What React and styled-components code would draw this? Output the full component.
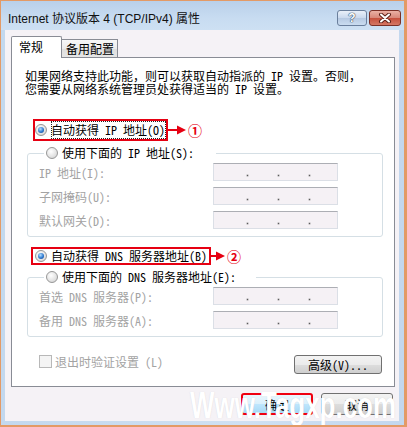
import React from 'react';
import styled, { createGlobalStyle } from 'styled-components';

const GlobalStyle = createGlobalStyle`
  html, body {
    margin: 0;
    padding: 0;
    background: #fff;
  }
  body {
    font-family: "Noto Sans Mono CJK SC", "Noto Sans CJK SC", monospace;
    font-size: 12px;
    color: #000;
  }
`;

const App = () => {
  return (
    <>
      <GlobalStyle />
      <Window>
        <TitleBar>
          <Title>Internet 协议版本 4 (TCP/IPv4) 属性</Title>
          <CaptionButtons>
            <HelpBtn>?</HelpBtn>
            <CloseBtn>
              <svg width='14' height='10' viewBox='0 0 14 10'>
                <path d='M3 1.5 L11 8.5 M11 1.5 L3 8.5' stroke='#5a2018' strokeWidth='4' strokeLinecap='round' />
                <path d='M3 1.5 L11 8.5 M11 1.5 L3 8.5' stroke='#fff' strokeWidth='2' strokeLinecap='round' />
              </svg>
            </CloseBtn>
          </CaptionButtons>
        </TitleBar>

        <Client>
          <TabRow>
            <Tab $active>常规</Tab>
            <Tab>备用配置</Tab>
          </TabRow>

          <Panel>
            <Intro>
              如果网络支持此功能，则可以获取自动指派的 IP 设置。否则，
              <br />
              您需要从网络系统管理员处获得适当的 IP 设置。
            </Intro>

            <Marked $indent={21}>
              <RadioRow $mark $padX={0}>
                <Radio $checked />
                <RadioText $focus>自动获得 IP 地址(O)</RadioText>
              </RadioRow>
              <Arrow />
              <Badge>①</Badge>
            </Marked>

            <Group>
              <Legend $tail={22}>
                <RadioRow>
                  <Radio />
                  <RadioText>使用下面的 IP 地址(S):</RadioText>
                </RadioRow>
              </Legend>
              <FieldList>
                <IpField label='IP 地址(I):' />
                <IpField label='子网掩码(U):' />
                <IpField label='默认网关(D):' />
              </FieldList>
            </Group>

            <Marked $indent={19} $gap={10}>
              <RadioRow $mark $padX={2}>
                <Radio $checked />
                <RadioText>自动获得 DNS 服务器地址(B)</RadioText>
              </RadioRow>
              <Arrow short />
              <Badge>②</Badge>
            </Marked>

            <Group>
              <Legend $tail={20}>
                <RadioRow>
                  <Radio />
                  <RadioText>使用下面的 DNS 服务器地址(E):</RadioText>
                </RadioRow>
              </Legend>
              <FieldList>
                <IpField label='首选 DNS 服务器(P):' />
                <IpField label='备用 DNS 服务器(A):' />
              </FieldList>
            </Group>

            <BottomRow>
              <CheckLabel>
                <CheckBox />
                退出时验证设置 (L)
              </CheckLabel>
              <PushBtn>高级(V)...</PushBtn>
            </BottomRow>
          </Panel>

          <Footer>
            <DialogBtn $default>确定</DialogBtn>
            <DialogBtn>取消</DialogBtn>
          </Footer>
        </Client>

        <Watermark>Www.Tagxp.com</Watermark>
      </Window>
    </>
  );
};

const IpField = ({ label }) => (
  <FieldRow>
    <FieldLabel>{label}</FieldLabel>
    <IpBox>
      <Dot />
      <Dot />
      <Dot />
    </IpBox>
  </FieldRow>
);

const Arrow = ({ short }) => {
  const w = short ? 14 : 18;
  return (
    <svg width={w} height='10' viewBox={`0 0 ${w} 10`}>
      <line x1='0' y1='5' x2={w - 8} y2='5' stroke='#e60012' strokeWidth='2' />
      <polygon points={`${w - 9},0.5 ${w},5 ${w - 9},9.5`} fill='#e60012' />
    </svg>
  );
};

export default App; /*





*/ // Styling

const Window = styled.div`
  position: relative;
  width: 407px;
  height: 427px;
  box-sizing: border-box;
  border: solid #e39a66;
  border-width: 1px 3px 2px 1px;
  background: linear-gradient(to right, #c3d8ee, #cfe0f2 60%, #c3d7ee);
  display: flex;
  flex-direction: column;
  overflow: hidden;
`;

const TitleBar = styled.div`
  height: 29px;
  display: flex;
  align-items: flex-start;
  justify-content: space-between;
  background: linear-gradient(#b9d0ea, #c8dcf1 60%, #cde0f3);
`;

const Title = styled.div`
  margin: 10px 0 0 7px;
  font-family: "Liberation Sans", "Noto Sans CJK SC", sans-serif;
  font-size: 12px;
  line-height: 16px;
  color: #111;
`;

const CaptionButtons = styled.div`
  display: flex;
  gap: 2px;
  margin: 9px 3px 0 0;
`;

const HelpBtn = styled.div`
  width: 30px;
  height: 16px;
  box-sizing: border-box;
  border: 1px solid #6a7f9c;
  border-radius: 3px;
  background: linear-gradient(#e9f0f9, #cbdaee 48%, #b6c9e2 52%, #cadcf0);
  display: flex;
  align-items: center;
  justify-content: center;
  font-family: "Liberation Sans", sans-serif;
  font-weight: bold;
  font-size: 12px;
  color: #fff;
  text-shadow: 0 0 1px #33465f, 0 0 1px #33465f, 0 0 1px #33465f;
`;

const CloseBtn = styled.div`
  width: 32px;
  height: 16px;
  box-sizing: border-box;
  border: 1px solid #7a3027;
  border-radius: 3px;
  background: linear-gradient(#eab0a4, #d8887a 48%, #c6503d 52%, #d47764);
  display: flex;
  align-items: center;
  justify-content: center;
`;

const Client = styled.div`
  flex: 1;
  margin: 0 5px 4px 4px;
  padding: 6px 4px 0 6px;
  background: #f5f2f6;
  display: flex;
  flex-direction: column;
`;

const TabRow = styled.div`
  display: flex;
  align-items: flex-end;
  margin-bottom: -1px;
  position: relative;
  z-index: 1;
`;

const Tab = styled.div`
  box-sizing: border-box;
  border: 1px solid #898c95;
  border-bottom: none;
  line-height: 14px;
  ${({ $active }) =>
    $active
      ? `
    width: 51px;
    height: 22px;
    padding: 3px 0 0 7px;
    background: #fff;
    border-radius: 2px 2px 0 0;
  `
      : `
    width: 57px;
    height: 18px;
    margin: 0 0 1px -1px;
    padding: 2px 0 0 4px;
    background: linear-gradient(#f7f7f7, #ececec 50%, #dedede 51%, #e6e6e6);
  `}
`;

const Panel = styled.div`
  border: 1px solid #898c95;
  background: #fff;
  padding: 11px 0 12px 0;
  display: flex;
  flex-direction: column;
  align-items: flex-start;
`;

const Intro = styled.p`
  margin: 0 0 0 13px;
  line-height: 13px;
  white-space: nowrap;
`;

const Marked = styled.div`
  display: flex;
  align-items: center;
  margin: ${({ $gap }) => $gap ?? 24}px 0 0 ${({ $indent }) => $indent}px;

  & > svg {
    margin-left: 0;
  }
`;

const RadioRow = styled.label`
  display: flex;
  align-items: center;
  gap: 4px;
  line-height: 14px;
  white-space: nowrap;
  ${({ $mark, $padX }) =>
    $mark &&
    `
    border: 2px solid #e60012;
    padding: 0 ${$padX}px;
  `}
`;

const Radio = styled.span`
  position: relative;
  width: 12px;
  height: 12px;
  box-sizing: border-box;
  border-radius: 50%;
  border: 1px solid #979797;
  background: radial-gradient(circle at 40% 35%, #ffffff, #e2e2e2 60%, #c8c8c8);
  flex: none;

  &::after {
    content: '';
    display: ${({ $checked }) => ($checked ? 'block' : 'none')};
    position: absolute;
    left: 2px;
    top: 2px;
    width: 6px;
    height: 6px;
    border-radius: 50%;
    background: radial-gradient(circle at 40% 35%, #b6e0ff, #2d78cf 55%, #123d82);
  }
`;

const RadioText = styled.span`
  ${({ $focus }) =>
    $focus &&
    `
    padding: 2px 1px 2px 0;
    outline: 1px dotted #222;
    outline-offset: -1px;
  `}
`;

const Badge = styled.span`
  margin-left: 2px;
  color: #e60012;
  font-family: "Noto Sans CJK SC", sans-serif;
  font-weight: bold;
  font-size: 14px;
  line-height: 14px;
`;

const Group = styled.fieldset`
  box-sizing: border-box;
  width: 356px;
  margin: 4px 0 0 15px;
  padding: 2px 0 7px 11px;
  border: 1px solid #d5dfe5;
  border-radius: 3px;
  min-width: 0;
`;

const Legend = styled.legend`
  margin-left: 5px;
  padding: 0 ${({ $tail }) => $tail}px 0 2px;
  line-height: 16px;
  height: 16px;
  display: flex;
  align-items: center;
`;

const FieldList = styled.div`
  display: flex;
  flex-direction: column;
  gap: 6px;
`;

const FieldRow = styled.div`
  display: flex;
  align-items: center;
  height: 18px;
`;

const FieldLabel = styled.span`
  width: 174px;
  color: #a3a3a3;
  white-space: nowrap;
`;

const IpBox = styled.div`
  width: 125px;
  height: 18px;
  box-sizing: border-box;
  border: 1px solid #dbdfe6;
  border-top-color: #acaeb4;
  background: #f5f1f5;
  display: flex;
  align-items: flex-end;
  gap: 30px;
  padding: 0 0 4px 33px;
`;

const Dot = styled.span`
  width: 1px;
  height: 1px;
  background: #5c5c5c;
  box-shadow: 0 0 0 0.4px #8a8a8a;
`;

const BottomRow = styled.div`
  align-self: stretch;
  display: flex;
  justify-content: space-between;
  align-items: flex-start;
  margin: 18px 12px 0 27px;
`;

const CheckLabel = styled.label`
  display: flex;
  align-items: center;
  gap: 3px;
  line-height: 13px;
  color: #a3a3a3;
  white-space: nowrap;
`;

const CheckBox = styled.span`
  width: 13px;
  height: 13px;
  box-sizing: border-box;
  border: 1px solid #b8b8b8;
  background: #f4f4f4;
`;

const PushBtn = styled.button`
  width: 88px;
  height: 19px;
  box-sizing: border-box;
  padding: 0;
  border: 1px solid #707070;
  border-radius: 3px;
  background: linear-gradient(#f3f3f3, #ebebeb 50%, #dddddd 51%, #cfcfcf);
  font-family: inherit;
  font-size: 12px;
  line-height: 15px;
  color: #000;
`;

const Footer = styled.div`
  display: flex;
  justify-content: flex-end;
  gap: 8px;
  margin: 6px 2px 0 0;
`;

const DialogBtn = styled.button`
  width: 72px;
  height: 22px;
  box-sizing: border-box;
  padding: 0;
  border-radius: 3px;
  font-family: inherit;
  font-size: 12px;
  color: #000;
  border: ${({ $default }) => ($default ? '2px solid #f00010' : '1px solid #707070')};
  background: ${({ $default }) =>
    $default
      ? 'linear-gradient(#eaf6fd, #d9f0fc 50%, #bee6fd 51%, #a7d9f5)'
      : 'linear-gradient(#f3f3f3, #ebebeb 50%, #dddddd 51%, #cfcfcf)'};
`;

const Watermark = styled.div`
  position: absolute;
  left: 189px;
  top: 387px;
  font-family: "Liberation Sans", sans-serif;
  font-weight: bold;
  font-size: 36px;
  line-height: 36px;
  color: #fff;
  white-space: nowrap;
  transform: scaleX(0.72);
  transform-origin: left top;
  text-shadow: 0 0 1px rgba(150, 150, 160, 0.35);
  pointer-events: none;
`;
